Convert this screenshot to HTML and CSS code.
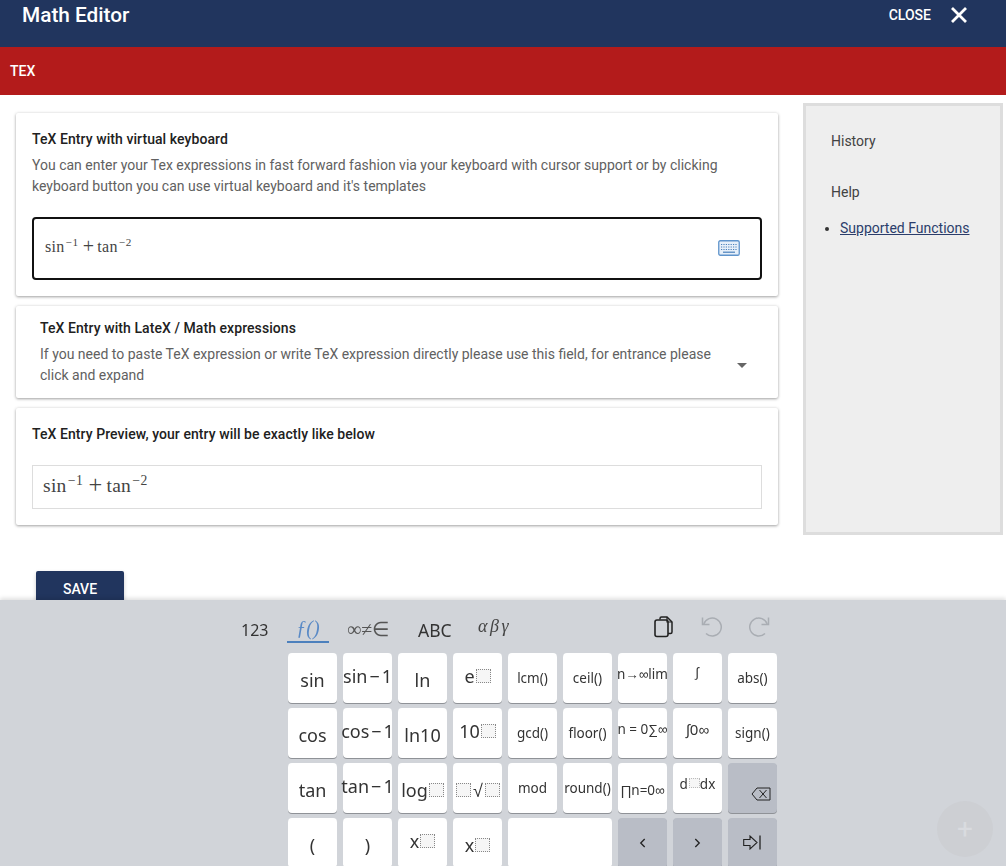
FILE: index.html
```html
<!DOCTYPE html>
<html lang="en">
<head>
<meta charset="utf-8">
<title>Math Editor</title>
<link rel="stylesheet" href="styles.css">
</head>
<body>
<header class="topbar">
  <h1 class="title">Math Editor</h1>
  <div class="close"><span>CLOSE</span>
    <svg class="close-x" viewBox="0 0 16 16" width="16" height="16"><path d="M1 1 L15 15 M15 1 L1 15" stroke="#fff" stroke-width="2.8" fill="none"/></svg>
  </div>
</header>
<nav class="tabbar"><span class="tab">TEX</span></nav>
<main class="content">
  <div class="left">
    <section class="card card-entry">
      <h2 class="card-title">TeX Entry with virtual keyboard</h2>
      <p class="card-text">You can enter your Tex expressions in fast forward fashion via your keyboard with cursor support or by clicking keyboard button you can use virtual keyboard and it's templates</p>
      <div class="field">
        <span class="math math-small">sin<sup>−1</sup><span class="op">+</span>tan<sup>−2</sup></span>
        <svg class="kbd-icon" viewBox="0 0 22 16" width="22" height="16">
          <rect x="0.75" y="0.75" width="20.5" height="14.5" rx="1.5" fill="#e6eff9" stroke="#5f94cc" stroke-width="1.3"/>
          <path d="M3 4.500h16M3 7h16M3 9.500h16" stroke="#4a80bb" stroke-width="1.200" stroke-dasharray="1.200 1.200" fill="none"/>
          <path d="M5 12.200h12" stroke="#4a80bb" stroke-width="1.200" fill="none"/>
        </svg>
      </div>
    </section>
    <section class="card card-expand">
      <div class="expand-body">
        <h2 class="card-title">TeX Entry with LateX / Math expressions</h2>
        <p class="card-text">If you need to paste TeX expression or write TeX expression directly please use this field, for entrance please click and expand</p>
      </div>
      <span class="caret"></span>
    </section>
    <section class="card card-preview">
      <h2 class="card-title">TeX Entry Preview, your entry will be exactly like below</h2>
      <div class="preview"><span class="math math-large">sin<sup>−1</sup><span class="op">+</span>tan<sup>−2</sup></span></div>
    </section>
    <button class="save">SAVE</button>
  </div>
  <aside class="side">
    <h3 class="side-head">History</h3>
    <h3 class="side-head side-help">Help</h3>
    <ul class="side-list"><li><a href="#">Supported Functions</a></li></ul>
  </aside>
</main>

<div class="keyboard">
  <div class="kb-toolbar">
    <span class="kb-tab kb-123">123</span>
    <span class="kb-tab kb-fn">ƒ()</span>
    <span class="kb-tab kb-sym">∞≠∈</span>
    <span class="kb-tab kb-abc">ABC</span>
    <span class="kb-tab kb-greek">αβγ</span>
    <div class="kb-actions">
      <svg class="kb-act" viewBox="0 0 20 22" width="20" height="22"><path d="M7 3.500V2.500a1.500 1.500 0 0 1 1.500-1.500H14l5 5v10a1.500 1.500 0 0 1-1.500 1.500H15" fill="none" stroke="#222" stroke-width="1.500"/><path d="M14 1v5h5" fill="none" stroke="#222" stroke-width="1.200"/><rect x="2" y="4" width="13" height="16.500" rx="2" fill="none" stroke="#222" stroke-width="1.600"/></svg>
      <svg class="kb-act" viewBox="0 0 22 22" width="22" height="22"><path d="M6 17.500A9 9 0 1 0 3.800 8" fill="none" stroke="#a9adb3" stroke-width="1.500"/><path d="M2.500 1.500V8.500H9.500" fill="none" stroke="#a9adb3" stroke-width="1.500"/></svg>
      <svg class="kb-act" viewBox="0 0 22 22" width="22" height="22"><path d="M16 17.500A9 9 0 1 1 18.200 8" fill="none" stroke="#a9adb3" stroke-width="1.500"/><path d="M19.500 1.500V8.500H12.500" fill="none" stroke="#a9adb3" stroke-width="1.500"/></svg>
    </div>
  </div>
  <div class="keys">
    <div class="key k-lg">sin</div>
    <div class="key k-lg up">sin<span class="mn">−</span>1</div>
    <div class="key k-lg">ln</div>
    <div class="key k-lg up">e<i class="ph"></i></div>
    <div class="key k-sm">lcm()</div>
    <div class="key k-sm">ceil()</div>
    <div class="key k-sm up">n→∞lim</div>
    <div class="key k-sm up2">∫</div>
    <div class="key k-sm">abs()</div>

    <div class="key k-lg">cos</div>
    <div class="key k-lg up">cos<span class="mn">−</span>1</div>
    <div class="key k-lg">ln10</div>
    <div class="key k-lg up">10<i class="ph"></i></div>
    <div class="key k-sm">gcd()</div>
    <div class="key k-sm">floor()</div>
    <div class="key k-sm up">n = 0∑∞</div>
    <div class="key k-md up">∫0∞</div>
    <div class="key k-sm">sign()</div>

    <div class="key k-lg">tan</div>
    <div class="key k-lg up">tan<span class="mn">−</span>1</div>
    <div class="key k-lg">log<i class="ph"></i></div>
    <div class="key k-lg"><i class="ph"></i><span class="rt">√</span><i class="ph"></i></div>
    <div class="key k-sm">mod</div>
    <div class="key k-sm">round()</div>
    <div class="key k-sm k-low">∏n=0∞</div>
    <div class="key k-sm up"><span>d<i class="ph ph-faint"></i>dx</span></div>
    <div class="key key-dark key-bs">
      <svg viewBox="0 0 20 14" width="20" height="14"><path d="M6 1H19V13H6L1 7Z M8.500 3L15.500 11M15.500 3L8.500 11" fill="none" stroke="#222" stroke-width="1"/></svg>
    </div>

    <div class="key k-lg">(</div>
    <div class="key k-lg">)</div>
    <div class="key k-lg up">x<i class="ph"></i></div>
    <div class="key k-lg">x<i class="ph"></i></div>
    <div class="key key-wide"></div>
    <div class="key key-dark">
      <svg viewBox="0 0 8 12" width="7" height="12"><path d="M6.500 1.500L2 6L6.500 10.500" fill="none" stroke="#222" stroke-width="1.500"/></svg>
    </div>
    <div class="key key-dark">
      <svg viewBox="0 0 8 12" width="7" height="12"><path d="M1.500 1.500L6 6L1.500 10.500" fill="none" stroke="#222" stroke-width="1.500"/></svg>
    </div>
    <div class="key key-dark">
      <svg viewBox="0 0 18 15" width="18" height="15"><path d="M0.700 4.500H7V1L14 7.500L7 14V10.500H0.700Z" fill="none" stroke="#222" stroke-width="1.100"/><path d="M17 0.500V14.500" stroke="#222" stroke-width="1.300"/></svg>
    </div>
  </div>
  <div class="fab"><span class="fab-plus">+</span></div>
</div>
</body>
</html>
```
FILE: styles.css
```css
* { box-sizing: border-box; }
html, body { margin: 0; height: 866px; overflow: hidden; }
body { font-family: Roboto, sans-serif; background: #fff; color: #212121; }

.topbar { height: 47px; background: #21355e; color: #fff; display: flex; justify-content: space-between; padding: 3px 39px 0 22px; }
.title { margin: 0; font-size: 20.800px; line-height: 24px; font-weight: 500; }
.close { display: flex; align-items: flex-start; gap: 20px; font-size: 14px; font-weight: 500; line-height: 24px; }
.close-x { margin-top: 4px; }

.tabbar { height: 48px; background: #b31b1b; color: #fff; display: flex; align-items: center; padding-left: 10px; }
.tab { font-size: 14px; font-weight: 500; }

.content { display: flex; align-items: flex-start; gap: 25px; padding: 8px 3px 0 16px; }
.left { width: 762px; padding-top: 10px; flex: none; }
.side { width: 200px; height: 432px; flex: none; background: #eee; border: 3px solid #ddd; padding: 25px 0 0 25px; }

.card { background: #fff; border-radius: 2px; box-shadow: 0 1px 3px rgba(0,0,0,.35), 0 0 4px rgba(0,0,0,.06); margin-bottom: 10px; }
.card-title { margin: 0; font-size: 14px; line-height: 20px; font-weight: 500; color: #212121; letter-spacing: .07px; }
.card-text { margin: 6px 0 0; font-size: 14px; line-height: 21px; color: #616161; }

.card-entry { height: 183px; padding: 16px; }
.field { height: 63px; margin-top: 20px; border: 2px solid #111; border-radius: 4px; display: flex; justify-content: space-between; align-items: flex-start; padding: 16px 20px 0 11px; }
.kbd-icon { margin-top: 5px; }

.math { font-family: "Liberation Serif", serif; color: #444; white-space: nowrap; display: inline-block; letter-spacing: .3px; }
.math sup { font-size: 70%; line-height: 0; margin-left: 1px; letter-spacing: .6px; vertical-align: .55em; }
.op { font-size: 125%; line-height: 0; margin: 0 3px 0 4px; vertical-align: -.05em; }
.math-small { font-size: 16px; line-height: 24px; }
.math-large { font-size: 19.500px; line-height: 24px; }
.math-large .op { margin: 0 4px 0 5px; }

.card-expand { height: 92px; padding: 11px 24px 12px; display: flex; align-items: center; }
.expand-body { flex: 1; padding-right: 20px; }
.card-expand .card-text { margin-top: 6px; }
.caret { width: 0; height: 0; border-left: 5px solid transparent; border-right: 5px solid transparent; border-top: 5px solid #666; margin-top: 27px; margin-right: 7px; }

.card-preview { height: 117px; padding: 16px; margin-bottom: 46px; }
.preview { height: 44px; margin-top: 21px; border: 1px solid #ddd; padding: 8px 10px; }

.save { display: block; width: 88px; height: 36px; margin-left: 20px; background: #21355e; color: #fff; border: 0; border-radius: 2px; font-family: Roboto, sans-serif; font-size: 14px; font-weight: 500; padding: 0; box-shadow: 0 2px 4px rgba(0,0,0,.2); }

.side-head { margin: 0; font-size: 14px; line-height: 20px; font-weight: 400; color: #424242; }
.side-help { margin-top: 31px; }
.side-list { margin: 16px 0 0; padding-left: 9px; font-size: 14px; line-height: 20px; color: #333; }
.side-list a { color: #2b3d6b; }

.keyboard { position: fixed; left: 0; right: 0; top: 600px; bottom: 0; overflow: hidden; background: #d1d4d9; box-shadow: 0 -2px 4px rgba(0,0,0,.12); font-family: "Noto Sans", sans-serif; color: #333; }
.kb-toolbar { height: 52.500px; position: relative; }
.kb-tab { position: absolute; top: 17px; line-height: 24px; }
.kb-123 { left: 241px; top: 18px; font-size: 16px; color: #333; }
.kb-fn { left: 287px; width: 42px; height: 26px; text-align: center; color: #5a8ac6; font-family: "Liberation Serif", serif; font-style: italic; font-size: 20px; line-height: 23px; border-bottom: 2px solid #4c80bd; }
.kb-sym { left: 347px; font-family: "Liberation Serif", serif; font-size: 20px; color: #555; }
.kb-abc { left: 418px; top: 18px; font-size: 17.500px; }
.kb-greek { left: 478px; top: 14px; font-family: "Liberation Serif", serif; font-style: italic; font-size: 18px; letter-spacing: 2.500px; color: #444; }
.kb-actions { position: absolute; left: 653px; top: 16px; display: flex; gap: 27px; }
.kb-act { display: block; }

.keys { display: grid; grid-template-columns: repeat(9, 49.700px); grid-auto-rows: 50.500px; gap: 4.500px 5.300px; margin-left: 287.700px; }
.key { background: #fff; border-radius: 4px; display: flex; align-items: center; justify-content: center; white-space: nowrap; box-shadow: 0 1px 0 #8f9297; color: #333; }
.k-lg { font-size: 18px; padding-top: 4px; }
.k-sm { font-size: 13.500px; }
.k-md { font-size: 15px; }
.k-low { padding-top: 4px; }
.key.up { padding: 0 0 4px; }
.key.k-sm.up { padding: 0 0 8px; }
.key.k-md.up { padding: 0 0 8px; }
.key.up2 { padding: 0 0 12px; }
.mn { margin: 0 2px; }
.rt { margin: 0 1px 0 2px; }
.key-wide { grid-column: span 2; }
.key-dark { background: #b9bdc6; }
.key-bs { align-items: flex-end; justify-content: flex-end; padding: 0 6px 12px 0; }
.ph { display: inline-block; width: 15px; height: 14px; border: 1px dotted #888; vertical-align: 2px; margin-left: 1px; background: #f6f6f6; }
.ph-faint { border-color: #bbb; width: 11px; height: 10px; vertical-align: 1px; }

.fab { position: absolute; left: 937px; top: 201px; width: 56px; height: 56px; border-radius: 50%; background: #cdcfd3; color: #d9dbdf; display: flex; align-items: center; justify-content: center; font-family: Roboto, sans-serif; font-size: 28px; line-height: 1; }
```
